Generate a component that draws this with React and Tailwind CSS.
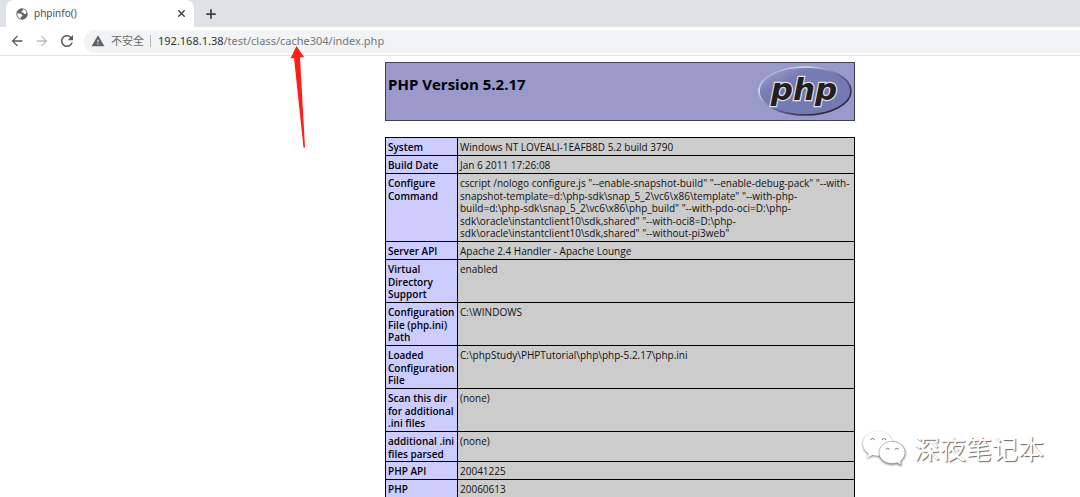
import { Plus, X } from "lucide-react";
import { MdArrowBack, MdArrowForward, MdRefresh, MdWarning } from "react-icons/md";

const rows = [
  ["System", "Windows NT LOVEALI-1EAFB8D 5.2 build 3790", "h-[18px]"],
  ["Build Date", "Jan 6 2011 17:26:08", "h-[18px]"],
  [
    "Configure Command",
    'cscript /nologo configure.js "--enable-snapshot-build" "--enable-debug-pack" "--with-snapshot-template=d:\\php-sdk\\snap_5_2\\vc6\\x86\\template" "--with-php-build=d:\\php-sdk\\snap_5_2\\vc6\\x86\\php_build" "--with-pdo-oci=D:\\php-sdk\\oracle\\instantclient10\\sdk,shared" "--with-oci8=D:\\php-sdk\\oracle\\instantclient10\\sdk,shared" "--without-pi3web"',
    "h-[68px]",
  ],
  ["Server API", "Apache 2.4 Handler - Apache Lounge", "h-[18px]"],
  ["Virtual Directory Support", "enabled", "h-[43px]"],
  ["Configuration File (php.ini) Path", "C:\\WINDOWS", "h-[43px]"],
  ["Loaded Configuration File", "C:\\phpStudy\\PHPTutorial\\php\\php-5.2.17\\php.ini", "h-[43px]"],
  ["Scan this dir for additional .ini files", "(none)", "h-[43px]"],
  ["additional .ini files parsed", "(none)", "h-[30px]"],
  ["PHP API", "20041225", "h-[18px]"],
  ["PHP", "20060613", "h-[18px]"],
];

function GlobeIcon() {
  return (
    <svg width="12" height="12" viewBox="0 0 12 12" aria-hidden="true" className="shrink-0">
      <circle cx="6" cy="6" r="5.700" fill="#5f6368" />
      <path
        d="M1.300 5.200 5 5.800 6.700 7.400 6 8.600 4.800 8.800 4.600 10.700C2.600 10.200 1.100 8.200 1.300 5.200ZM6.800 1.300C8.600 1.500 10.100 2.800 10.600 4.600L9.300 6.200 7.700 5.600 7.300 4.400 5.500 4.300 5.300 3.200 6.800 2.700Z"
        fill="white"
      />
    </svg>
  );
}

function PhpLogo() {
  return (
    <svg width="96" height="54" viewBox="0 0 96 54" role="img" aria-label="PHP logo" className="shrink-0">
      <defs>
        <linearGradient id="rim" x1="0" y1="0" x2="1" y2="1">
          <stop offset="0" stopColor="#7377ad" />
          <stop offset="0.25" stopColor="#dcddf2" />
          <stop offset="0.5" stopColor="#6a6d9e" />
          <stop offset="0.75" stopColor="#33334f" />
          <stop offset="1" stopColor="#20202f" />
        </linearGradient>
        <linearGradient id="face" x1="0" y1="0" x2="1" y2="1">
          <stop offset="0" stopColor="#a9acd8" />
          <stop offset="0.3" stopColor="#777bb3" />
          <stop offset="1" stopColor="#7478b0" />
        </linearGradient>
      </defs>
      <ellipse cx="49" cy="28" rx="46" ry="24" fill="url(#face)" stroke="url(#rim)" strokeWidth="1.600" />
      <text
        x="48"
        y="37"
        textAnchor="middle"
        fontFamily="'DejaVu Sans', sans-serif"
        fontSize="31"
        fontWeight="700"
        fontStyle="italic"
        fill="#231f20"
        stroke="#e0e0ea"
        strokeWidth="2.400"
        paintOrder="stroke"
      >
        php
      </text>
    </svg>
  );
}

function BrowserChrome() {
  return (
    <header>
      <div className="flex h-[27px] items-end bg-[#dee1e6]">
        <div className="h-full w-1.5 rounded-br-md bg-[#dee1e6]" />
        <div className="flex h-full w-[188px] items-center rounded-t-lg bg-white pr-[7px] pl-2.5">
          <GlobeIcon />
          <span className="ml-1.5 grow text-[10px] text-[#4a4d51]">phpinfo()</span>
          <button type="button" aria-label="Close tab" className="text-[#3c4043]">
            <X size={11} strokeWidth={3} />
          </button>
        </div>
        <button type="button" aria-label="New tab" className="ml-2.5 self-center text-[#3c4043]">
          <Plus size={14} strokeWidth={3} />
        </button>
      </div>
      <div className="flex h-[29px] items-center border-b border-[#e3e4e6] bg-white pl-[9px]">
        <button type="button" aria-label="Back" className="text-[#54575b]">
          <MdArrowBack size={16} />
        </button>
        <button type="button" aria-label="Forward" className="ml-[9px] text-[#babcbe]">
          <MdArrowForward size={16} />
        </button>
        <button type="button" aria-label="Reload" className="ml-2 text-[#54575b]">
          <MdRefresh size={18} />
        </button>
        <div className="ml-2 flex h-[23px] grow items-center rounded-l-full bg-[#f1f3f4] pl-[7px]">
          <MdWarning className="size-3.5 text-[#5f6368]" />
          <span className="ml-1.5 text-[11px] text-[#696c70]">不安全</span>
          <span className="ml-1.5 h-3 w-px bg-[#b8babd]" />
          <a href="#top" className="ml-[7px] text-[11px] text-[#75787c]">
            <span className="text-[#303236]">192.168.1.38</span>/test/class/cache304/index.php
          </a>
        </div>
      </div>
    </header>
  );
}

function Watermark() {
  return (
    <div className="absolute right-9 bottom-7 flex items-center gap-1.5">
      <svg
        width="46"
        height="40"
        viewBox="0 0 46 40"
        aria-hidden="true"
        className="drop-shadow-[0px_1px_1px_#777777]"
      >
        <path
          d="M16 2C7.500 2 1 7.500 1 14.500c0 4.300 2.200 7.800 5.500 10L5 29l5.500-3c2 .6 4 .9 6 .8C24 26 30 20 30.500 12.500 28.500 6 23 2 16 2Z"
          fill="white"
        />
        <path
          d="M30 12.500c-7.500 0-13 5-13 11s5.500 11 13 11c1.800 0 3.300-.3 4.800-.8L39.500 36l-1.200-3.800C41.300 30 43 27 43 23.500c0-6-5.500-11-13-11Z"
          fill="white"
          stroke="#999"
          strokeWidth="0.700"
        />
        <path
          d="M8.500 11q2-3 4 0M20 11q2-3 4 0M24 20.500q1.800-2.500 3.600 0M33 20.500q1.800-2.500 3.600 0"
          fill="none"
          stroke="#888"
          strokeWidth="1.200"
        />
      </svg>
      <span className="text-[26px] leading-9 text-white [text-shadow:1px_1px_1px_#666666]">深夜笔记本</span>
    </div>
  );
}

export default function App() {
  return (
    <div
      id="top"
      className="relative h-screen overflow-hidden bg-white font-['Noto_Sans','Noto_Sans_CJK_SC',sans-serif] text-black"
    >
      <BrowserChrome />
      <main className="flex flex-col items-center pt-1.5 pl-40 font-['Open_Sans',sans-serif]">
        <div className="flex h-[59px] w-full max-w-[470px] items-start justify-between border border-[#404055] bg-[#9999cc] px-0.5">
          <h1 className="pt-2.5 text-[15px] leading-[22px] font-bold">PHP Version 5.2.17</h1>
          <PhpLogo />
        </div>
        <table className="mt-4 w-full max-w-[470px] table-fixed border-collapse text-[10px] leading-tight">
          <colgroup>
            <col className="w-[72px]" />
            <col />
          </colgroup>
          <tbody>
            {rows.map(([name, value, height]) => (
              <tr key={name} className={height}>
                <th
                  scope="row"
                  className="border border-black bg-[#ccccff] pt-[3px] pb-px pl-0.5 text-left align-top font-semibold"
                >
                  {name}
                </th>
                <td className="border border-black bg-[#cccccc] pt-[3px] pb-px pl-0.5 align-top text-[#111111]">
                  {value}
                </td>
              </tr>
            ))}
          </tbody>
        </table>
      </main>
      <svg
        width="16"
        height="104"
        viewBox="0 0 16 104"
        aria-hidden="true"
        className="absolute top-[45px] left-[290px]"
      >
        <path d="M6.500 1 14 12l-4 .5L15 102.500h-1.500L4 13 .5 13.500Z" fill="#ff1f14" />
      </svg>
      <Watermark />
    </div>
  );
}
